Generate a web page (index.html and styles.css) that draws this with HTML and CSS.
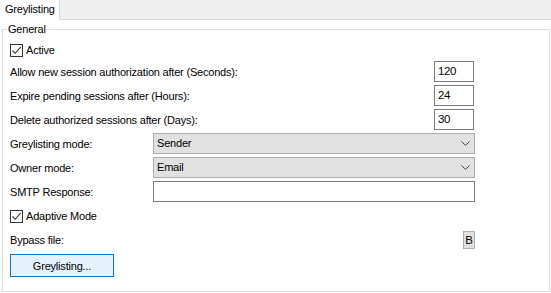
FILE: index.html
```html
<!DOCTYPE html>
<html lang="en">
<head>
    <meta charset="UTF-8">
    <title>Greylisting</title>
    <link rel="stylesheet" href="styles.css">
</head>
<body>
    <div class="tabs">
        <div class="tab">Greylisting</div>
        <div class="tab-rest"></div>
    </div>
    <div class="panel">
        <fieldset class="group">
            <legend>General</legend>
            <div class="form">
                <label class="check first">
                    <span class="box"><svg width="11" height="11" viewBox="0 0 11 11"><polyline points="1.5,5.5 4.2,8.3 9.6,2.2" fill="none" stroke="#333" stroke-width="1.1"/></svg></span>
                    Active
                </label>

                <div class="row first-row">
                    <span class="label">Allow new session authorization after (Seconds):</span>
                    <span class="num">120</span>
                </div>
                <div class="row">
                    <span class="label">Expire pending sessions after (Hours):</span>
                    <span class="num">24</span>
                </div>
                <div class="row">
                    <span class="label">Delete authorized sessions after (Days):</span>
                    <span class="num">30</span>
                </div>

                <div class="row">
                    <span class="label wide">Greylisting mode:</span>
                    <span class="select">Sender
                        <svg class="chevron" width="9" height="5" viewBox="0 0 9 5"><polyline points="0.5,0.5 4.5,4.3 8.5,0.5" fill="none" stroke="#444" stroke-width="1"/></svg>
                    </span>
                </div>
                <div class="row">
                    <span class="label wide">Owner mode:</span>
                    <span class="select">Email
                        <svg class="chevron" width="9" height="5" viewBox="0 0 9 5"><polyline points="0.5,0.5 4.5,4.3 8.5,0.5" fill="none" stroke="#444" stroke-width="1"/></svg>
                    </span>
                </div>
                <div class="row">
                    <span class="label wide">SMTP Response:</span>
                    <span class="text-input"></span>
                </div>

                <label class="check adaptive">
                    <span class="box"><svg width="11" height="11" viewBox="0 0 11 11"><polyline points="1.5,5.5 4.2,8.3 9.6,2.2" fill="none" stroke="#333" stroke-width="1.1"/></svg></span>
                    Adaptive Mode
                </label>

                <div class="row bypass">
                    <span class="label">Bypass file:</span>
                    <span class="small-btn">B</span>
                </div>

                <button class="btn">Greylisting...</button>
            </div>
        </fieldset>
    </div>
</body>
</html>
```

FILE: styles.css
```css
body {
    margin: 0;
    width: 551px;
    height: 293px;
    overflow: hidden;
    background: #fff;
    color: #000;
    font-family: "Liberation Sans", Arial, sans-serif;
    font-size: 11px;
    letter-spacing: -0.2px;
}

.tabs {
    display: flex;
    height: 20px;
    background: #f0f0f0;
}

.tab {
    width: 60px;
    height: 20px;
    box-sizing: border-box;
    padding-left: 5px;
    line-height: 19px;
    background: #fff;
    border-right: 1px solid #d9d9d9;
}

.tab-rest {
    flex: 1;
    border-bottom: 1px solid #d9d9d9;
}

.panel {
    padding: 2px 0 0 2px;
}

.group {
    margin: 0;
    padding: 0 0 0 7px;
    width: 548px;
    height: 270px;
    box-sizing: border-box;
    border: 1px solid #dcdcdc;
    min-width: 0;
}

.group legend {
    margin-left: -3px;
    padding: 0 1px;
    line-height: 15px;
}

.form {
    width: 465px;
    display: flex;
    flex-direction: column;
}

.check {
    display: flex;
    align-items: center;
    height: 18px;
}

.check.first {
    margin-top: 4px;
}

.check.adaptive {
    margin-top: 5px;
}

.box {
    width: 13px;
    height: 13px;
    box-sizing: border-box;
    border: 1px solid #333;
    margin-right: 3px;
    display: flex;
    align-items: center;
    justify-content: center;
}

.row {
    display: flex;
    align-items: center;
    height: 21px;
    margin-top: 3px;
}

.row.first-row {
    margin-top: 2px;
}

.label.wide {
    width: 143px;
}

.num {
    margin-left: auto;
    margin-right: 1px;
    width: 40px;
    height: 21px;
    box-sizing: border-box;
    border: 1px solid #7a7a7a;
    padding-left: 3px;
    line-height: 19px;
    font-size: 11.5px;
    letter-spacing: -0.4px;
}

.select {
    position: relative;
    width: 322px;
    height: 21px;
    box-sizing: border-box;
    background: #e1e1e1;
    border: 1px solid #adadad;
    padding-left: 3px;
    line-height: 19px;
}

.chevron {
    position: absolute;
    right: 4px;
    top: 7px;
}

.text-input {
    width: 322px;
    height: 21px;
    box-sizing: border-box;
    border: 1px solid #7a7a7a;
    background: #fff;
}

.row.bypass {
    height: 18px;
    margin-top: 6px;
}

.small-btn {
    margin-left: auto;
    width: 12px;
    height: 18px;
    box-sizing: border-box;
    background: #e1e1e1;
    border: 1px solid #adadad;
    text-align: center;
    line-height: 16px;
    font-size: 11.5px;
}

.btn {
    margin-top: 5px;
    width: 104px;
    height: 23px;
    padding: 0;
    background: #e5f1fb;
    border: 1px solid #0078d7;
    font-family: inherit;
    font-size: 11px;
    letter-spacing: -0.2px;
    color: #000;
}
```
